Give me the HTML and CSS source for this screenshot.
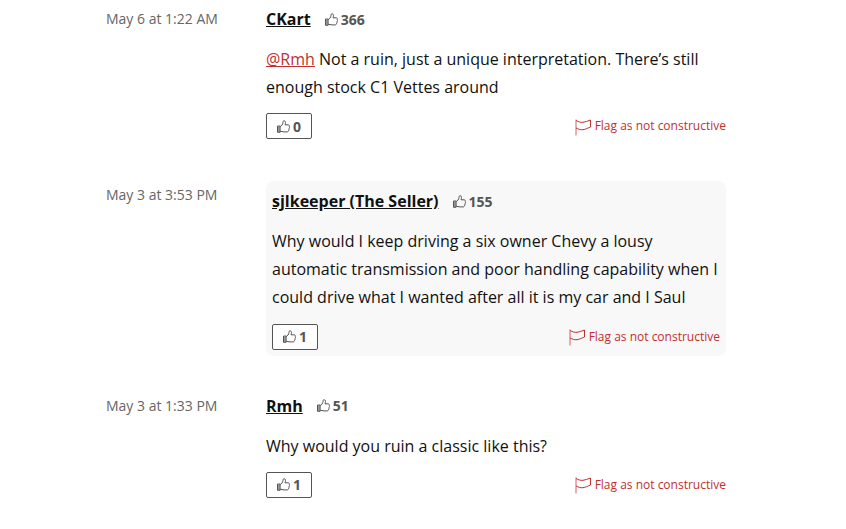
FILE: index.html
```html
<!DOCTYPE html>
<html lang="en">
<head>
<meta charset="utf-8">
<title>Comments</title>
<link rel="stylesheet" href="styles.css">
</head>
<body>
<svg class="defs" aria-hidden="true">
  <symbol id="thumb" viewBox="0.500 0.500 13 13">
    <path d="M1 6.500h2.600v6.300H1z M3.600 7.200C5 6.400 6.300 4.800 6.500 3.200c.1-1 .2-2 1-2 1.300 0 1.700 1.300 1.400 2.700L8.500 5.300h3.100c1 0 1.500.9 1.200 1.700.4.700.3 1.300-.2 1.800.2.700 0 1.300-.5 1.700.1 1-.5 1.900-1.500 1.900H7.500c-1.500 0-2.500-.6-3.900-.7" fill="none" stroke="currentColor" stroke-width="1"/>
    <path d="M1 7h2.400v5.600H1z" fill="currentColor" fill-opacity=".6"/>
  </symbol>
  <symbol id="flag" viewBox="0 0 16 17">
    <path d="M1 0.500V16.500" fill="none" stroke="currentColor" stroke-width="1" stroke-opacity=".75"/>
    <path d="M1 1.500C3.500 2.800 5.500 3.600 8 3.300c2.500-.3 4.800-1.300 7.500-2.300v7c-2.700 1-5 2.400-7.500 2.700-2.500.3-4.500-.5-7-1.700" fill="none" stroke="currentColor" stroke-width="1"/>
  </symbol>
</svg>
<main class="comments">
  <article class="comment">
    <time class="date">May 6 at 1:22 AM</time>
    <div class="body">
      <header class="head">
        <a class="author" href="#">CKart</a>
        <span class="score"><svg class="thumb"><use href="#thumb"/></svg>366</span>
      </header>
      <p class="text"><a class="mention" href="#">@Rmh</a> Not a ruin, just a unique interpretation. There’s still enough stock C1 Vettes around</p>
      <footer class="actions">
        <button class="like"><svg class="thumb"><use href="#thumb"/></svg>0</button>
        <a class="flag" href="#"><svg class="flag-icon"><use href="#flag"/></svg>Flag as not constructive</a>
      </footer>
    </div>
  </article>
  <article class="comment seller">
    <time class="date">May 3 at 3:53 PM</time>
    <div class="body">
      <header class="head">
        <a class="author" href="#">sjlkeeper (The Seller)</a>
        <span class="score"><svg class="thumb"><use href="#thumb"/></svg>155</span>
      </header>
      <p class="text">Why would I keep driving a six owner Chevy a lousy automatic transmission and poor handling capability when I could drive what I wanted after all it is my car and I Saul</p>
      <footer class="actions">
        <button class="like"><svg class="thumb"><use href="#thumb"/></svg>1</button>
        <a class="flag" href="#"><svg class="flag-icon"><use href="#flag"/></svg>Flag as not constructive</a>
      </footer>
    </div>
  </article>
  <article class="comment">
    <time class="date">May 3 at 1:33 PM</time>
    <div class="body">
      <header class="head">
        <a class="author" href="#">Rmh</a>
        <span class="score"><svg class="thumb"><use href="#thumb"/></svg>51</span>
      </header>
      <p class="text">Why would you ruin a classic like this?</p>
      <footer class="actions">
        <button class="like"><svg class="thumb"><use href="#thumb"/></svg>1</button>
        <a class="flag" href="#"><svg class="flag-icon"><use href="#flag"/></svg>Flag as not constructive</a>
      </footer>
    </div>
  </article>
</main>
</body>
</html>
```

FILE: styles.css
```css
* { box-sizing: border-box; }
html, body { margin: 0; height: 529px; overflow: hidden; background: #fff; }
body { font-family: "Open Sans", "Liberation Sans", sans-serif; color: #111; }
.defs { position: absolute; width: 0; height: 0; }
.comments { width: 620px; margin-left: 106px; padding-top: 5px; }
.comment { display: grid; grid-template-columns: 160px 460px; margin-bottom: 42px; }
.comment.seller { margin-bottom: 35.700px; }
.date { font-size: 14px; line-height: 28px; color: #666; }
.seller .body { background: #f8f8f8; border-radius: 8px; padding: 6px; }
.head { display: flex; align-items: center; height: 28px; gap: 14px; }
.author { font-size: 16px; font-weight: 700; color: #111; text-decoration: underline; }
.score { display: flex; align-items: center; gap: 3px; font-size: 14px; font-weight: 700; color: #555; }
.thumb { width: 13px; height: 13px; }
.text { margin: 12px 0; font-size: 16px; line-height: 28px; }
.seller .text { margin-bottom: 12.900px; }
.mention { color: #c0302f; }
.actions { display: flex; align-items: center; justify-content: space-between; }
.like { display: flex; align-items: center; justify-content: center; gap: 3px; width: 46px; height: 26px; padding: 0; background: #fff; border: 1px solid #555; border-radius: 2px; font: 700 14px "Open Sans", sans-serif; color: #555; }
.flag { display: flex; align-items: center; gap: 4px; margin-bottom: 1px; font-size: 12px; color: #c0302f; text-decoration: none; }
.flag-icon { width: 16px; height: 17px; margin-top: 3px; }
```
